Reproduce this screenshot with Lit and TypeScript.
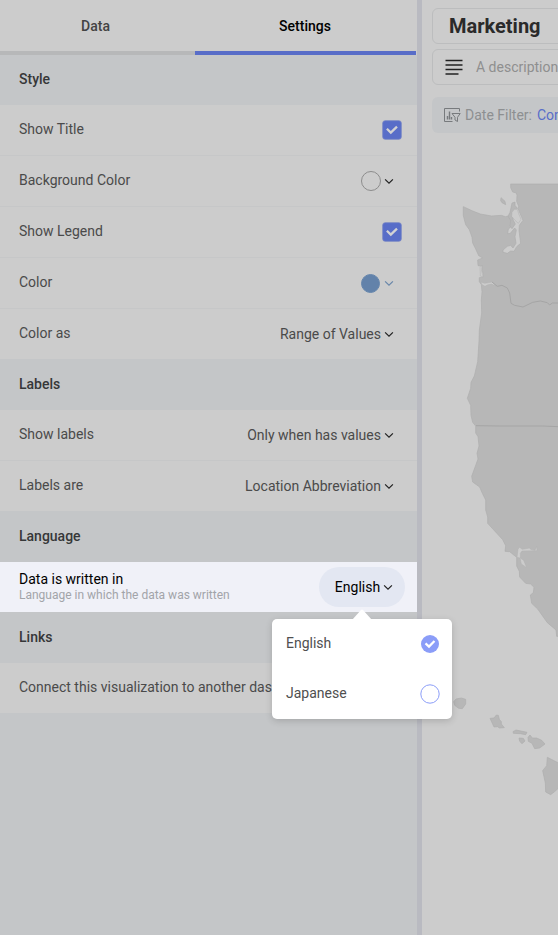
import { LitElement, html, css, svg } from "lit";
import { customElement, property } from "lit/decorators.js";

const chevron = html`<svg class="chev" width="10" height="7" viewBox="0 0 10 7"><path d="M1.1 1.3 5 5.2 8.9 1.3" fill="none" stroke="currentColor" stroke-width="1.2"/></svg>`;

@customElement("check-box")
class CheckBox extends LitElement {
  static styles = css`
    :host { display: block; width: 20px; height: 20px; }
    svg { display: block; }
  `;
  render() {
    return html`<svg width="20" height="20" viewBox="0 0 20 20">
      <rect x="0.7" y="0.7" width="18.6" height="18.6" rx="2.5" fill="#586dc8" stroke="#7584c5" stroke-width="0.8"/>
      <path d="M4.9 8.8 8.8 12.6 15 6.6" fill="none" stroke="#d2d2d4" stroke-width="2.3"/>
    </svg>`;
  }
}

@customElement("setting-row")
class SettingRow extends LitElement {
  @property() label = "";
  static styles = css`
    :host {
      display: flex; box-sizing: border-box; height: 51px; flex: none;
      align-items: center; justify-content: space-between;
      padding: 0 15px 2px 19px; background: #ccc; border-bottom: 1px solid #c6c7c8;
      color: #4a4a4a; white-space: nowrap;
    }
    :host([last]) { height: 50px; padding-bottom: 1px; border-bottom-color: #ccc; }
    .control { display: flex; align-items: center; position: relative; top: 1px; }
  `;
  render() {
    return html`<span>${this.label}</span><div class="control"><slot></slot></div>`;
  }
}

@customElement("region-map")
class RegionMap extends LitElement {
  static styles = css`
    :host { display: block; width: 136px; height: 765px; }
    svg { display: block; }
    .land { fill: #b7b7b7; stroke: #adadad; stroke-width: 2; }
    .water { fill: #ccc; stroke: #b1b1b1; stroke-width: 1.5; }
    .border { fill: none; stroke: #a5a5a5; stroke-width: 3; }
  `;
  render() {
    return html`<svg width="136" height="765" viewBox="6 0 408 2295">
      ${svg`
      <path class="land" d="M430 42H272V53L278 66L289 69L291 76L290 94L296 109L294 115L300 130L309 151L298 166L297 182L302 220L290 230L282 244L272 243L262 250L249 247V240L262 229L272 226L279 234L288 220L285 200L289 180L284 174L271 190L263 191L265 177L275 169L279 163L272 149L265 138L256 140L244 136L215 138L181 132L158 123L130 110V137L137 164L148 179L156 202L158 219L168 239L176 257L188 264L173 270L174 287H187V301L191 320L178 323V335L184 344L186 365L184 390L185 429L178 480
      L177 513L173 575L163 618L153 637L152 655L142 685L152 706L153 736L158 757L167 768V789L174 800L177 828L171 850L174 867L155 919L158 936L179 951L187 970L197 990V1020L203 1041L203 1060L248 1109L257 1127L255 1144L269 1145L290 1162V1188L298 1204L299 1221L317 1240L332 1242L342 1252L340 1268L331 1275L335 1300L353 1317L382 1358L408 1380L410 1399L430 1400Z"/>
      <path class="land" d="M243 83L255 94L257 104L246 98L242 92ZM276 99L285 96V106L292 115L284 123L274 131L280 151L286 162L276 176L270 167L272 151L264 139L270 127Z"/>
      <path class="water" d="M276 127L283 118H292L296 131L303 148L295 160L285 151L275 139ZM180 289H186L184 300L189 320L181 318ZM182 336L194 340L216 336L229 349L214 342L202 345L195 349L186 344ZM291 1162L294 1137L299 1132L307 1138L329 1134L332 1138L345 1141L350 1129L351 1142L306 1143L301 1150V1164L311 1171L320 1193L304 1182L300 1164Z"/>
      <path class="border" d="M216 336L232 349L246 346L262 354L269 369L273 400L284 406L309 411L338 397L361 393L382 398L389 405L397 399H414M168 767L237 768L368 768L414 770"/>
      <path class="land" d="M101 1595L108 1587L124 1584L137 1588V1602L127 1616L116 1615L104 1606ZM210 1645L222 1644L229 1635L235 1636L238 1648L244 1655V1662L253 1673L238 1674L233 1670L222 1671ZM279 1685L288 1680L321 1687L317 1694L301 1691L280 1690ZM297 1704L310 1705L315 1713L306 1721L299 1714ZM324 1702L330 1695L337 1704L350 1704L365 1711L375 1722L359 1734L344 1736L336 1720L325 1714ZM382 1762L420 1781V1850L405 1864L392 1874L377 1866L376 1839L368 1802L380 1787Z"/>
      `}
    </svg>`;
  }
}

@customElement("app-root")
export class AppRoot extends LitElement {
  static styles = css`
    :host {
      display: flex; position: relative; width: 558px; height: 935px; overflow: hidden;
      font: 14px/18px Roboto, "Liberation Sans", sans-serif; background: #ccc;
    }
    .panel { width: 417px; flex: none; display: flex; flex-direction: column; background: #c4c6c8; }
    .tabs { display: flex; height: 55px; flex: none; background: #ccc; box-sizing: border-box; padding-right: 1px; }
    .tab {
      box-sizing: border-box; display: flex; align-items: center; justify-content: center;
      width: 195px; border-bottom: 4px solid #b7b8b9; font-weight: 500; color: #434343; height: 55px;
    }
    .tab.active { width: 221px; border-color: #586dc8; color: #000; padding-right: 1px; }
    .tab.first { padding-right: 4px; }
    .head {
      height: 50px; flex: none; box-sizing: border-box; padding: 0 19px 2px; display: flex;
      align-items: center; font-weight: 500; color: #363738;
    }
    .head.tall { height: 51px; padding-top: 1px; }
    .lang {
      height: 50px; flex: none; box-sizing: border-box; background: #f0f1f8;
      display: flex; align-items: center; justify-content: space-between; padding: 0 12px 0 19px; color: #000;
    }
    .titles { display: flex; flex-direction: column; padding-bottom: 2px; }
    .titles .sub { font-size: 12px; line-height: 14px; color: #a2a4a9; }
    .pill {
      display: flex; align-items: center; justify-content: center; box-sizing: border-box; padding-left: 4px;
      width: 86px; height: 40px; border-radius: 20px; background: #e3e7f2;
    }
    .chev { display: block; margin-left: 3px; color: #222; }
    .value { display: flex; align-items: center; margin-right: 8px; }
    .swatch { box-sizing: border-box; width: 20px; height: 20px; border-radius: 50%; border: 1px solid #8c8c8c; }
    .swatch.filled { width: 19px; height: 19px; margin-right: 1px; background: #6282aa; border-color: #6787ad; }
    .faded .chev { color: #6987aa; }
    .divider { width: 5px; flex: none; background: #b9bac1; }
    .canvas { width: 136px; flex: none; display: flex; flex-direction: column; overflow: hidden; }
    .field {
      box-sizing: border-box; height: 36px; width: 200px; margin-left: 10px; flex: none;
      border: 1px solid #bcbdbe; border-radius: 6px; display: flex; align-items: center; white-space: nowrap;
    }
    .title { margin-top: 8px; padding-left: 16px; font-size: 20px; font-weight: 700; color: #2a2a2a; }
    .desc { margin-top: 5px; padding-left: 12px; gap: 13px; color: #8f8f8f; }
    .filter { margin-top: 12px; padding-left: 12px; border: 0; background: #c4c6c8; color: #8d8f91; }
    .filter svg { margin-right: 4px; }
    .filter .link { color: #586dc8; margin-left: 5px; }
    .map { margin-top: 37px; }
    .menu {
      position: absolute; left: 272px; top: 619px; width: 180px; height: 100px; box-sizing: border-box;
      background: #fff; border-radius: 5px; box-shadow: 0 2px 7px rgba(0, 0, 0, .16); color: #4f4f4f;
    }
    .arrow { position: absolute; left: 80px; top: -10px; }
    .option { height: 50px; display: flex; align-items: center; justify-content: space-between; padding: 0 12px 0 14px; box-sizing: border-box; }
    .option span { padding-bottom: 2px; }
  `;

  private value(text: string) {
    return html`<div class="value"><span>${text}</span>${chevron}</div>`;
  }

  render() {
    return html`
      <div class="panel">
        <div class="tabs"><div class="tab first">Data</div><div class="tab active">Settings</div></div>
        <div class="head">Style</div>
        <setting-row label="Show Title"><check-box></check-box></setting-row>
        <setting-row label="Background Color"><div class="value"><span class="swatch"></span>${chevron}</div></setting-row>
        <setting-row label="Show Legend"><check-box></check-box></setting-row>
        <setting-row label="Color"><div class="value faded"><span class="swatch filled"></span>${chevron}</div></setting-row>
        <setting-row label="Color as" last>${this.value("Range of Values")}</setting-row>
        <div class="head tall">Labels</div>
        <setting-row label="Show labels">${this.value("Only when has values")}</setting-row>
        <setting-row label="Labels are" last>${this.value("Location Abbreviation")}</setting-row>
        <div class="head tall">Language</div>
        <div class="lang">
          <div class="titles"><span>Data is written in</span><span class="sub">Language in which the data was written</span></div>
          <div class="pill"><span>English</span>${chevron}</div>
        </div>
        <div class="head tall">Links</div>
        <setting-row label="Connect this visualization to another dashboard" last></setting-row>
      </div>
      <div class="divider"></div>
      <div class="canvas">
        <div class="field title">Marketing</div>
        <div class="field desc">
          <svg width="18" height="16" viewBox="0 0 18 16" stroke="#222" stroke-width="1.3"><path d="M.5 1.500h17M.5 6h17M.5 10.500h17M.5 15h13"/></svg>
          <span>A description</span>
        </div>
        <div class="field filter">
          <svg width="17" height="15" viewBox="0 0 17 15" fill="none" stroke="#777a7d" stroke-width="1"><path d="M8.500 13.500H.5V.5h15V3.500M8 5.500h8.200l-2.700 3.800V13.500l-2.500-1.500V9.300z"/><path d="M3.500 11.500V8M5.500 11.500V3.500M7.500 11.500V9" stroke-width="1.400"/></svg>
          <span>Date Filter:</span><span class="link">Connected</span>
        </div>
        <region-map class="map"></region-map>
      </div>
      <div class="menu">
        <svg class="arrow" width="20" height="11" viewBox="0 0 20 11"><path d="M0 11 8.800 1.200Q10 0 11.200 1.200L20 11Z" fill="#fff"/></svg>
        <div class="option"><span>English</span>
          <svg width="20" height="20" viewBox="0 0 20 20"><circle cx="10" cy="10" r="9" fill="#8b9df8"/><path d="M5.500 9.400 9 12.600 14.500 7" fill="none" stroke="#fff" stroke-width="2.200"/></svg>
        </div>
        <div class="option"><span>Japanese</span>
          <svg width="20" height="20" viewBox="0 0 20 20"><circle cx="10" cy="10" r="9.200" fill="#fff" stroke="#8b9df8" stroke-width="1"/></svg>
        </div>
      </div>
    `;
  }
}
